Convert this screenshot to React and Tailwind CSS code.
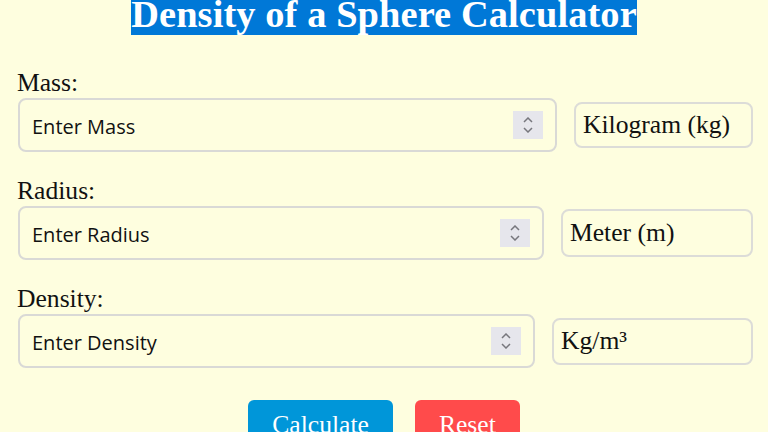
import { useState } from "react";

const serif = "font-['Liberation_Serif','Times_New_Roman',serif]";

function Spinner() {
  return (
    <div className="w-[30px] h-[28px] bg-[#e6e6ec] flex flex-col items-center justify-center gap-[4px] shrink-0">
      <svg width="10" height="6" viewBox="0 0 10 6" fill="none">
        <path d="M1 5L5 1L9 5" stroke="#77777d" strokeWidth="1.5" />
      </svg>
      <svg width="10" height="6" viewBox="0 0 10 6" fill="none">
        <path d="M1 1L5 5L9 1" stroke="#77777d" strokeWidth="1.5" />
      </svg>
    </div>
  );
}

function Field({ label, placeholder, unit, unitClass, value, onChange }) {
  return (
    <div className="flex flex-col">
      <label className={`${serif} text-[25.6px] leading-[30px] text-[#111] -ml-[1px]`}>
        {label}
      </label>
      <div className="flex items-center gap-[17px]">
        <div className="flex-1 h-[54px] flex items-center border-2 border-[#d9d9d6] rounded-[8px] pl-[12px] pr-[12px]">
          <input
            type="text"
            value={value}
            onChange={(e) => onChange(e.target.value)}
            placeholder={placeholder}
            className="flex-1 min-w-0 bg-transparent outline-none font-['Open_Sans','DejaVu_Sans',sans-serif] font-medium text-[20px] text-[#111] placeholder:text-[#111] pt-[3px]"
          />
          <Spinner />
        </div>
        <div
          className={`${unitClass} flex items-center border-2 border-[#dcdcd8] rounded-[8px] pl-[7px] ${serif} text-[25.6px] leading-[30px] text-[#111]`}
        >
          {unit}
        </div>
      </div>
    </div>
  );
}

export default function App() {
  const [mass, setMass] = useState("");
  const [radius, setRadius] = useState("");
  const [density, setDensity] = useState("");

  const reset = () => {
    setMass("");
    setRadius("");
    setDensity("");
  };

  return (
    <div className="w-[768px] h-[432px] overflow-hidden bg-[#fefedf]">
      <div className="flex justify-center -mt-[7px]">
        <h1 className={`${serif} font-bold text-[38.4px] leading-[42px] text-white bg-[#0078d7] tracking-[0.1px] whitespace-nowrap`}>
          Density of a Sphere Calculator
        </h1>
      </div>

      <div className="flex flex-col gap-[24px] mt-[33px] pl-[18px] pr-[15px]">
        <Field
          label="Mass:"
          placeholder="Enter Mass"
          unit="Kilogram (kg)"
          unitClass="w-[179px] h-[46px]"
          value={mass}
          onChange={setMass}
        />
        <Field
          label="Radius:"
          placeholder="Enter Radius"
          unit="Meter (m)"
          unitClass="w-[192px] h-[48px]"
          value={radius}
          onChange={setRadius}
        />
        <Field
          label="Density:"
          placeholder="Enter Density"
          unit="Kg/m³"
          unitClass="w-[201px] h-[47px]"
          value={density}
          onChange={setDensity}
        />
      </div>

      <div className="flex justify-center gap-[22px] mt-[32px]">
        <button className={`${serif} text-[25.6px] leading-[30px] text-white bg-[#0096d9] rounded-[6px] px-[24px] pt-[10px] pb-[10px]`}>
          Calculate
        </button>
        <button
          onClick={reset}
          className={`${serif} text-[25.6px] leading-[30px] text-white bg-[#ff4b4b] rounded-[6px] px-[24px] pt-[10px] pb-[10px]`}
        >
          Reset
        </button>
      </div>
    </div>
  );
}
